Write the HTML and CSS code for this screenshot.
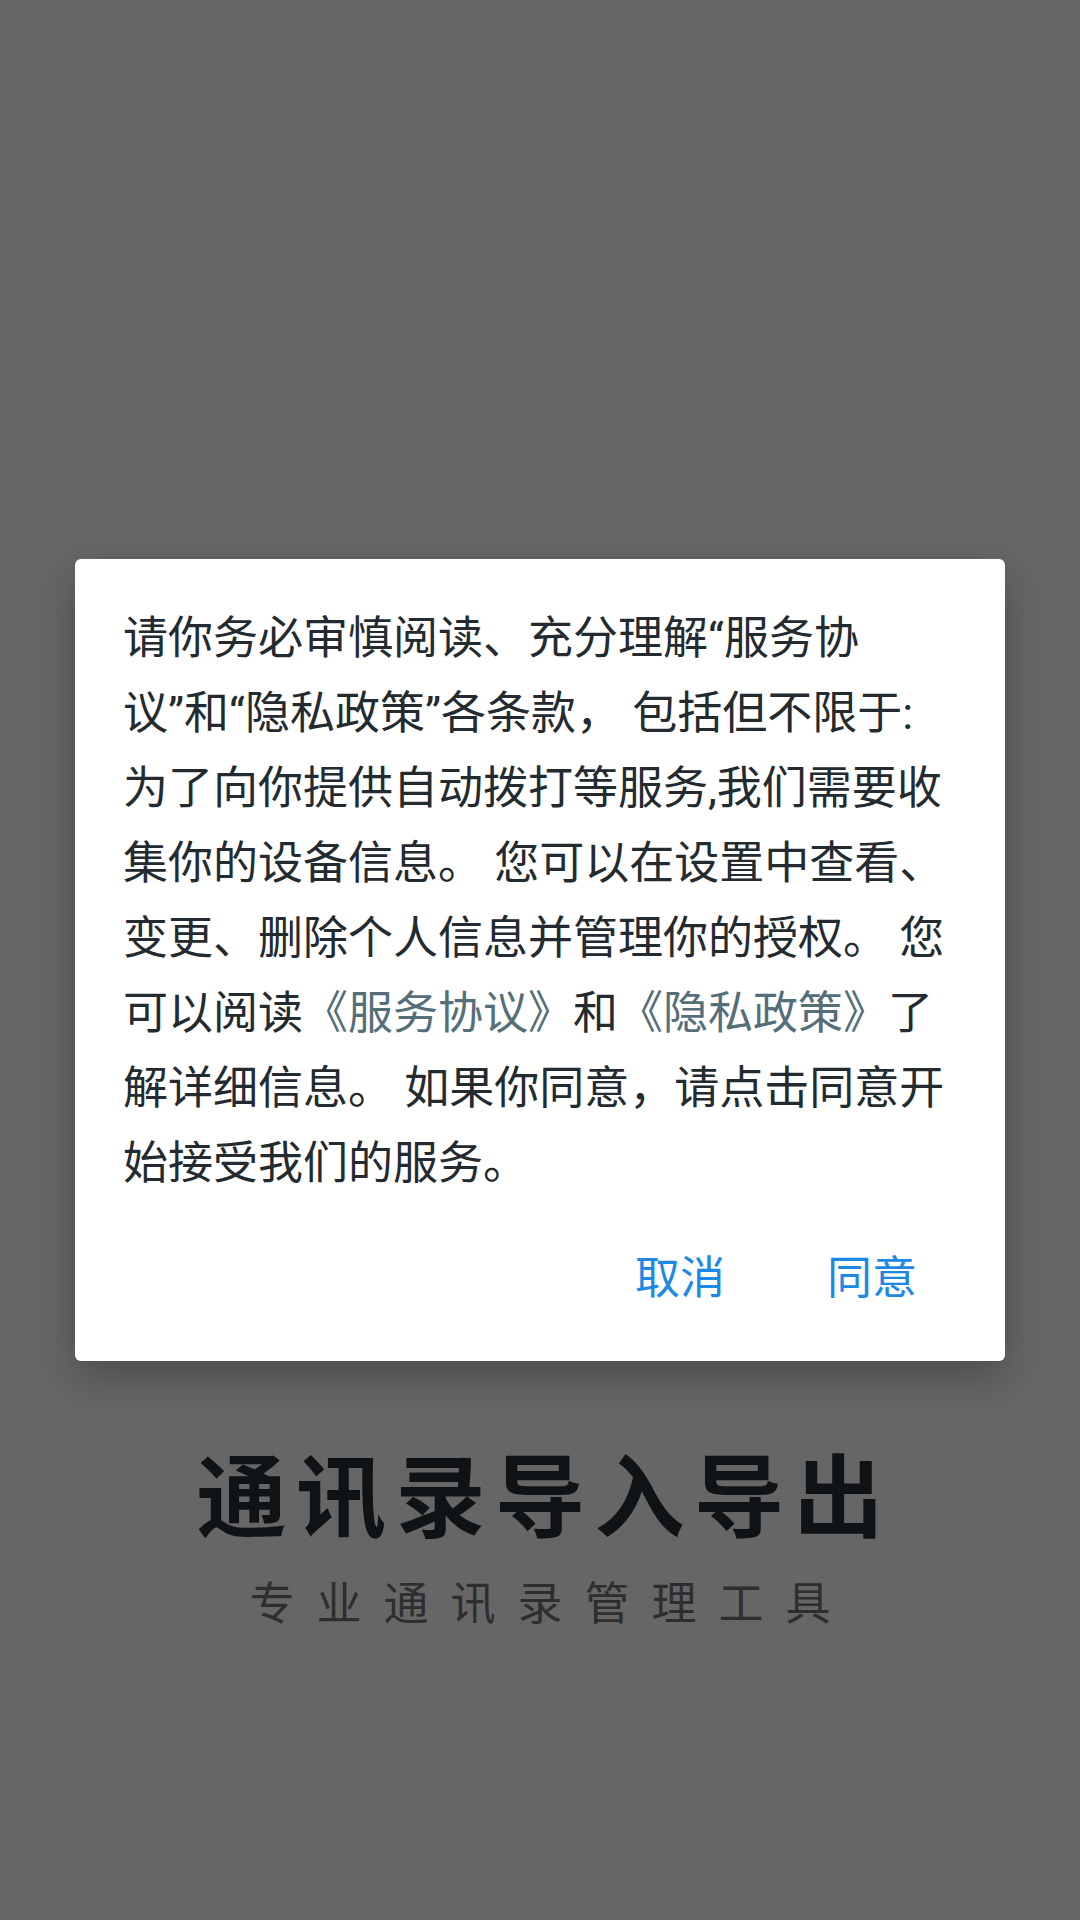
FILE: index.html
```html
<!DOCTYPE html>
<html lang="zh-CN">
<head>
<meta charset="utf-8">
<title>通讯录导入导出</title>
<link rel="stylesheet" href="styles.css">
</head>
<body>
<div class="screen">
  <div class="splash">
    <div class="app-title">通讯录导入导出</div>
    <div class="app-sub">专业通讯录管理工具</div>
  </div>
  <div class="dialog">
    <p class="dialog-text">请你务必审慎阅读、充分理解“服务协<br>议”和“隐私政策”各条款， 包括但不限于:<br>为了向你提供自动拨打等服务,我们需要收<br>集你的设备信息。 您可以在设置中查看、<br>变更、删除个人信息并管理你的授权。 您<br>可以阅读<span class="link">《服务协议》</span>和<span class="link">《隐私政策》</span>了<br>解详细信息。 如果你同意，请点击同意开<br>始接受我们的服务。</p>
    <div class="dialog-actions">
      <span class="btn">取消</span>
      <span class="btn">同意</span>
    </div>
  </div>
</div>
</body>
</html>
```
FILE: styles.css
```css
html, body {
  margin: 0;
  padding: 0;
}
body {
  width: 1080px;
  height: 1920px;
  overflow: hidden;
  background: #666666;
  font-family: Roboto, "Noto Sans CJK SC", sans-serif;
}
.screen {
  position: relative;
  width: 1080px;
  height: 1920px;
}
.splash {
  padding-top: 1446px;
  display: flex;
  flex-direction: column;
  align-items: center;
}
.app-title {
  font-family: "Noto Sans CJK SC", sans-serif;
  font-weight: 700;
  font-size: 90px;
  line-height: 90px;
  letter-spacing: 9.5px;
  padding-left: 9.5px;
  color: #0f1315;
}
.app-sub {
  margin-top: 42px;
  font-family: "Noto Sans CJK SC", sans-serif;
  font-size: 45px;
  line-height: 45px;
  letter-spacing: 22px;
  padding-left: 22px;
  color: #2e2e2e;
}
.dialog {
  position: absolute;
  top: 559px;
  left: 75px;
  width: 930px;
  box-sizing: border-box;
  background: #ffffff;
  border-radius: 6px;
  box-shadow: 0 16px 40px rgba(0, 0, 0, 0.25);
  padding: 42px 48px 45px 48px;
}
.dialog-text {
  margin: 0;
  font-size: 45px;
  line-height: 75px;
  color: #232b30;
  white-space: nowrap;
}
.link {
  color: #546e7a;
}
.dialog-actions {
  margin-top: 40px;
  display: flex;
  justify-content: flex-end;
  gap: 102px;
  padding-right: 40px;
}
.btn {
  font-size: 45px;
  line-height: 75px;
  color: #1e88e5;
}
```
